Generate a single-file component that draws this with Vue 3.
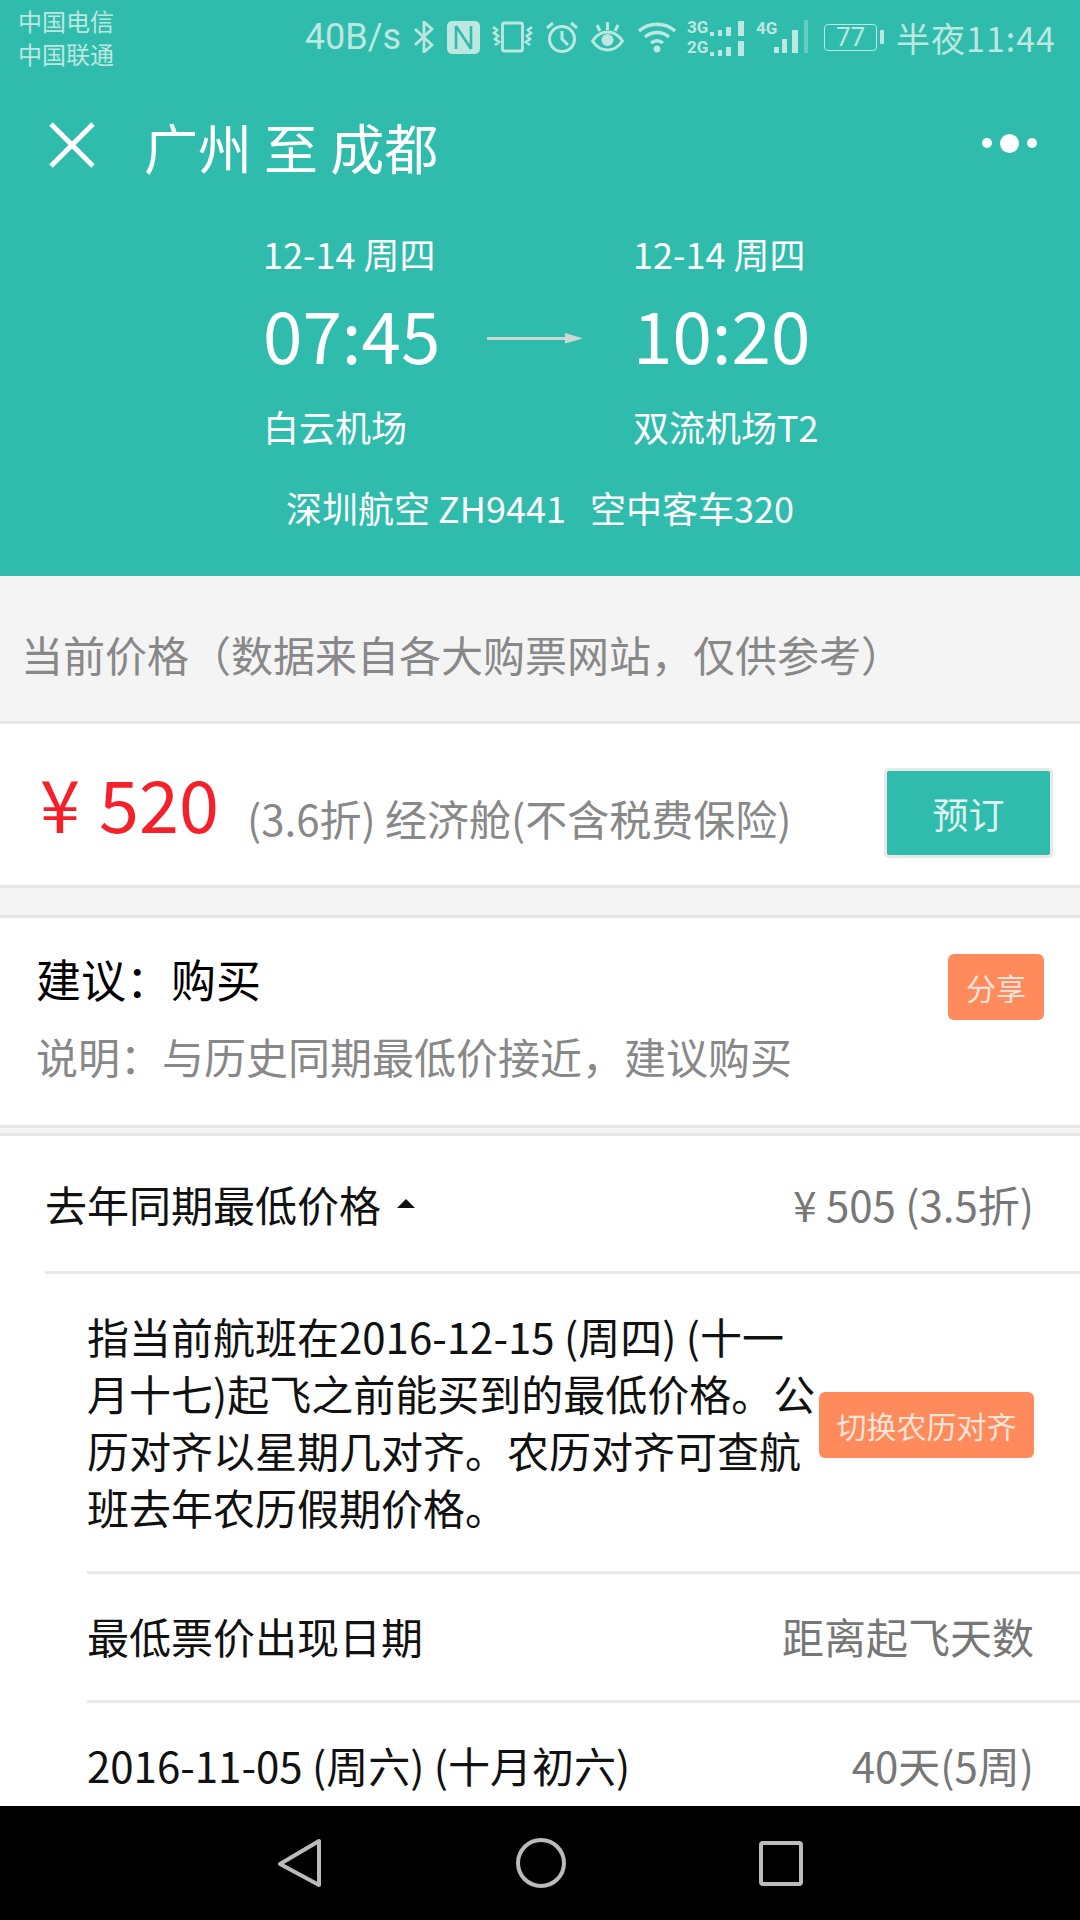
<script setup>
const rows = [
  { left: '最低票价出现日期', right: '距离起飞天数' },
  { left: '2016-11-05 (周六) (十月初六)', right: '40天(5周)' }
]
</script>

<template>
  <div class="page">
    <div class="content">
      <header class="head">
        <div class="status">
          <div class="carriers">
            <span>中国电信</span>
            <span>中国联通</span>
          </div>
          <div class="status-right">
            <span class="speed">40B/s</span>
            <svg class="ic-bt" width="20" height="32" viewBox="0 0 20 32" fill="none" stroke="currentColor" stroke-width="2.8">
              <path d="M1 8l17 16-8 7V1l8 7L1 24" />
            </svg>
            <svg class="ic-nfc" width="33" height="33" viewBox="0 0 33 33" fill="none">
              <rect width="33" height="33" rx="5" fill="currentColor" />
              <path d="M9 5v23M24 5v23M9 5l15 23" stroke="#30bcac" stroke-width="2.600" />
            </svg>
            <svg class="ic-vib" width="43" height="32" viewBox="0 0 43 32" fill="none" stroke="currentColor">
              <rect x="11.500" y="2" width="20" height="28" rx="2" stroke-width="2.800" />
              <path d="M2 6l4 3-3 3 4 3-3 3 4 3-4 3M41 6l-4 3 3 3-4 3 3 3-4 3 4 3" stroke-width="2.600" />
            </svg>
            <svg class="ic-alarm" width="32" height="32" viewBox="0 0 32 32" fill="none" stroke="currentColor" stroke-width="3">
              <circle cx="16" cy="18" r="12.500" />
              <path d="M16 10v8l6 6M1 7l6-5M31 7l-6-5" />
            </svg>
            <svg class="ic-eye" width="33" height="32" viewBox="0 0 33 32" fill="none" stroke="currentColor" stroke-width="3">
              <path d="M1.500 20c4-6 9-9 15-9s11 3 15 9c-4 6-9 9-15 9s-11-3-15-9z" />
              <circle cx="16.500" cy="19" r="6" fill="currentColor" stroke="none" />
              <path d="M16.500 1v8M6 4l3 6M27 4l-3 6" />
            </svg>
            <svg class="ic-wifi" width="38" height="32" viewBox="0 0 38 32" fill="none" stroke="currentColor" stroke-width="3.400">
              <path d="M1 10c10-9 26-9 36 0M7 16c7-6 17-6 24 0M13 22c4-3 8-3 12 0" />
              <circle cx="19" cy="28" r="3.400" fill="currentColor" stroke="none" />
            </svg>
            <div class="sim-dual">
              <div class="sim-line">
                <span class="net">3G</span>
                <svg width="36" height="15" viewBox="0 0 36 15" fill="currentColor">
                  <rect x="2" y="11" width="4" height="4" /><rect x="10" y="9" width="4" height="6" /><rect x="18" y="6" width="5" height="9" /><rect x="30" y="0" width="6" height="15" />
                </svg>
              </div>
              <div class="sim-line">
                <span class="net">2G</span>
                <svg width="36" height="15" viewBox="0 0 36 15" fill="currentColor">
                  <rect x="2" y="11" width="4" height="4" /><rect x="10" y="9" width="4" height="6" /><rect x="18" y="6" width="5" height="9" /><rect x="30" y="0" width="6" height="15" />
                </svg>
              </div>
            </div>
            <div class="sim-one">
              <span class="net">4G</span>
              <svg class="sim-one-bars" width="34" height="33" viewBox="0 0 34 33" fill="currentColor">
                <rect x="0" y="27" width="5" height="6" /><rect x="8" y="19" width="5" height="14" /><rect x="18" y="10" width="6" height="23" />
                <rect x="30" y="0" width="4" height="33" opacity="0.4" />
              </svg>
            </div>
            <div class="battery">77</div>
            <div class="battery-nub"></div>
            <span class="clock">半夜11:44</span>
          </div>
        </div>

        <div class="titlebar">
          <svg class="close" width="46" height="46" viewBox="0 0 46 46" fill="none" stroke="#fff" stroke-width="5">
            <path d="M2 2l42 42M44 2L2 44" />
          </svg>
          <h1 class="title">广州 至 成都</h1>
          <div class="more">
            <i></i><i class="big"></i><i></i>
          </div>
        </div>

        <div class="flight">
          <div class="end">
            <div class="date">12-14 周四</div>
            <div class="time">07:45</div>
            <div class="port">白云机场</div>
          </div>
          <svg class="arrow" width="96" height="12" viewBox="0 0 96 12">
            <rect x="0" y="5" width="80" height="3" fill="#d0d8d6" />
            <path d="M78 1l18 5.500-18 5z" fill="#d0d8d6" />
          </svg>
          <div class="end">
            <div class="date">12-14 周四</div>
            <div class="time">10:20</div>
            <div class="port">双流机场T2</div>
          </div>
        </div>
        <div class="plane">深圳航空 ZH9441&nbsp;&nbsp; 空中客车320</div>
      </header>

      <div class="section-label">当前价格（数据来自各大购票网站，仅供参考）</div>

      <section class="card price-card">
        <span class="price">¥ 520</span>
        <span class="fare">(3.6折) 经济舱(不含税费保险)</span>
        <button class="book">预订</button>
      </section>

      <section class="card advice-card">
        <div class="advice-text">
          <div class="advice">建议：购买</div>
          <div class="reason">说明：与历史同期最低价接近，建议购买</div>
        </div>
        <button class="orange share">分享</button>
      </section>

      <section class="card history">
        <div class="hist-head">
          <span class="hist-title">去年同期最低价格<i class="caret"></i></span>
          <span class="muted">¥ 505 (3.5折)</span>
        </div>
        <div class="hist-body">
          <div class="desc-row">
            <p class="desc">指当前航班在2016-12-15 (周四) (十一月十七)起飞之前能买到的最低价格。公历对齐以星期几对齐。农历对齐可查航班去年农历假期价格。</p>
            <button class="orange switch">切换农历对齐</button>
          </div>
          <div v-for="row in rows" :key="row.left" class="hist-row">
            <span>{{ row.left }}</span>
            <span class="muted">{{ row.right }}</span>
          </div>
        </div>
      </section>
    </div>

    <nav class="navbar">
      <svg width="46" height="50" viewBox="0 0 46 50" fill="none" stroke="#bbb" stroke-width="4" stroke-linejoin="round">
        <path d="M42 3v44L3 26z" />
      </svg>
      <svg width="50" height="50" viewBox="0 0 50 50" fill="none" stroke="#bbb" stroke-width="4">
        <circle cx="25" cy="25" r="23" />
      </svg>
      <svg width="44" height="45" viewBox="0 0 44 45" fill="none" stroke="#bbb" stroke-width="4" stroke-linejoin="round">
        <rect x="2" y="2" width="40" height="41" rx="2" />
      </svg>
    </nav>
  </div>
</template>

<style scoped>
.page {
  width: 1080px;
  height: 1920px;
  display: flex;
  flex-direction: column;
  overflow: hidden;
  background: #f4f4f4;
  font-family: "Noto Sans CJK SC", "Noto Sans", sans-serif;
  color: #111;
}

.content {
  flex: 1;
  overflow: hidden;
  min-height: 0;
}

.head {
  height: 576px;
  background: #30bcac;
  color: #fff;
}

.status {
  height: 74px;
  display: flex;
  justify-content: space-between;
  color: #bde7e1;
  padding: 0 24px 0 18px;
}

.carriers {
  display: flex;
  flex-direction: column;
  font-size: 24px;
  line-height: 33px;
  padding-top: 4px;
}

.status-right {
  display: flex;
  align-items: center;
}

.status-right > * {
  flex-shrink: 0;
}

.speed {
  font-family: Roboto, sans-serif;
  font-size: 36px;
  margin-right: 13px;
}

.ic-nfc { margin-left: 13px; }
.ic-vib { margin-left: 11px; }
.ic-alarm { margin-left: 12px; }
.ic-eye { margin-left: 13px; }
.ic-wifi { margin-left: 14px; }

.net {
  font-family: Roboto, sans-serif;
  font-size: 17px;
  font-weight: 700;
  line-height: 17px;
  width: 21px;
}

.sim-dual {
  margin-left: 11px;
  display: flex;
  flex-direction: column;
  gap: 3px;
}

.sim-line {
  display: flex;
  align-items: flex-end;
}

.sim-one {
  margin-left: 12px;
  height: 34px;
  display: flex;
}

.sim-one-bars {
  margin-left: -3px;
}

.battery {
  width: 53px;
  height: 27px;
  margin-left: 16px;
  box-sizing: border-box;
  border: 1.5px solid #bde7e1;
  border-radius: 4px;
  font-family: Roboto, sans-serif;
  font-size: 26px;
  line-height: 24px;
  text-align: center;
}

.battery-nub {
  width: 4px;
  height: 14px;
  margin-left: 3px;
  background: #bde7e1;
  border-radius: 1px;
}

.clock {
  margin-left: 12px;
  font-size: 34px;
  letter-spacing: 1px;
}

.titlebar {
  height: 146px;
  display: flex;
  align-items: center;
  padding: 0 43px 0 49px;
}

.close {
  flex-shrink: 0;
  margin-top: -4px;
}

.title {
  flex: 1;
  margin: 0 0 0 49px;
  font-size: 54px;
  font-weight: 400;
  line-height: 60px;
}

.more {
  display: flex;
  align-items: center;
  gap: 8px;
  margin-bottom: 8px;
}

.more i {
  width: 10px;
  height: 10px;
  border-radius: 50%;
  background: #fff;
}

.more i.big {
  width: 19px;
  height: 19px;
}

.flight {
  display: flex;
  align-items: flex-start;
  padding: 0 0 0 263px;
  margin-top: 9px;
}

.end {
  width: 221px;
}

.end:last-child {
  width: auto;
}

.date {
  font-size: 36px;
  line-height: 48px;
}

.time {
  font-size: 71px;
  line-height: 96px;
  margin-top: 8px;
}

.port {
  font-size: 36px;
  line-height: 50px;
  margin-top: 20px;
}

.arrow {
  margin: 103px 50px 0 3px;
  flex-shrink: 0;
}

.plane {
  margin-top: 31px;
  text-align: center;
  font-size: 36px;
  line-height: 50px;
}

.section-label {
  height: 148px;
  box-sizing: border-box;
  padding: 9px 0 0 21px;
  display: flex;
  align-items: center;
  font-size: 42px;
  color: #888;
  border-bottom: 3px solid #e6e6e6;
}

.card {
  background: #fff;
  border-bottom: 3px solid #e6e6e6;
}

.price-card {
  height: 164px;
  box-sizing: border-box;
  display: flex;
  align-items: center;
  padding: 0 30px 0 40px;
}

.price {
  font-size: 72px;
  color: #f5212a;
  line-height: 90px;
  margin-top: -6px;
  word-spacing: 3px;
}

.fare {
  flex: 1;
  margin: 26px 0 0 28px;
  font-size: 42px;
  color: #888;
}

.book {
  width: 163px;
  height: 84px;
  margin-top: 16px;
  border: 0;
  padding: 0;
  background: #30bcac;
  color: #dff4f1;
  font: inherit;
  font-size: 36px;
  border-radius: 2px;
  box-shadow: 0 0 0 3px #e8e8e8;
}

.orange {
  border: 0;
  padding: 0;
  background: #ff8a5c;
  color: #fbe5da;
  font: inherit;
  font-size: 30px;
  border-radius: 6px;
}

.advice-card {
  margin-top: 27px;
  border-top: 3px solid #e6e6e6;
  height: 213px;
  box-sizing: border-box;
  display: flex;
  justify-content: space-between;
  padding: 31px 36px 0 36px;
}

.advice {
  font-size: 45px;
  line-height: 60px;
  color: #000;
}

.reason {
  margin-top: 17px;
  font-size: 42px;
  line-height: 60px;
  color: #888;
}

.share {
  width: 96px;
  height: 66px;
  margin-top: 5px;
  flex-shrink: 0;
}

.history {
  margin-top: 5px;
  border-top: 3px solid #e6e6e6;
  border-bottom: 0;
  padding-left: 45px;
}

.hist-head {
  height: 135px;
  display: flex;
  align-items: center;
  justify-content: space-between;
  padding-right: 46px;
  font-size: 42px;
  border-bottom: 3px solid #e8e8e8;
}

.hist-title {
  display: flex;
  align-items: center;
}

.caret {
  width: 0;
  height: 0;
  margin-left: 16px;
  border-left: 9px solid transparent;
  border-right: 9px solid transparent;
  border-bottom: 9px solid #111;
}

.muted {
  color: #777;
}

.hist-body {
  padding-left: 42px;
  font-size: 42px;
}

.desc-row {
  height: 300px;
  box-sizing: border-box;
  display: flex;
  align-items: center;
  border-bottom: 3px solid #e8e8e8;
  padding-right: 46px;
}

.desc {
  margin: 0 0 3px;
  width: 732px;
  flex-shrink: 0;
  line-height: 57px;
}

.switch {
  width: 215px;
  height: 66px;
  margin-top: 4px;
  flex-shrink: 0;
}

.hist-row {
  height: 129px;
  box-sizing: border-box;
  display: flex;
  align-items: center;
  justify-content: space-between;
  padding: 0 46px 4px 0;
  border-bottom: 3px solid #e8e8e8;
}

.navbar {
  height: 114px;
  flex-shrink: 0;
  background: #000;
  display: flex;
  align-items: center;
  justify-content: center;
  gap: 193px;
}
</style>

<style>
body {
  margin: 0;
}
</style>
